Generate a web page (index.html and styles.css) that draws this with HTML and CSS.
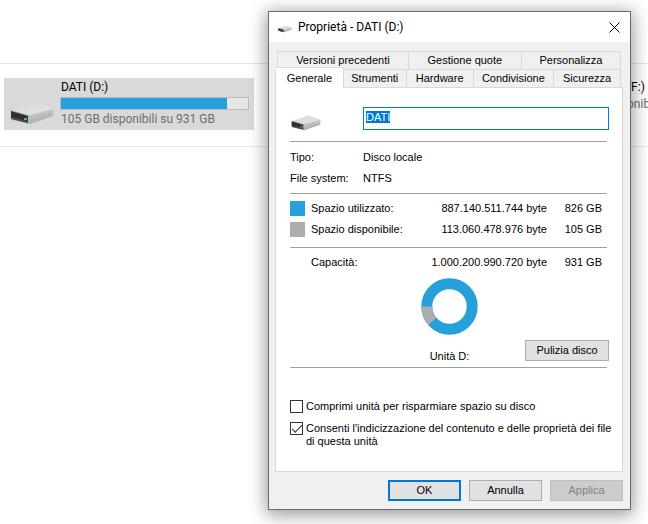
FILE: index.html
```html
<!DOCTYPE html>
<html lang="it">
<head>
  <meta charset="UTF-8" />
  <meta name="viewport" content="width=device-width, initial-scale=1.0" />
  <title>Proprietà - DATI (D:)</title>
  <link rel="stylesheet" href="styles.css">
</head>
<body>
  <!-- Icona disco condivisa -->
  <svg class="defs" width="0" height="0" aria-hidden="true">
    <defs>
      <linearGradient id="top-face" x1="0" y1="0" x2="1" y2="1">
        <stop offset="0" stop-color="#d8dadc" />
        <stop offset="1" stop-color="#e4e4e8" />
      </linearGradient>
      <linearGradient id="side-face" x1="0" y1="0" x2="0.4" y2="1">
        <stop offset="0" stop-color="#d6d7d9" />
        <stop offset="1" stop-color="#a6a8ab" />
      </linearGradient>
      <symbol id="drive" viewBox="0 0 44 23">
        <path d="M1 9 L24 1 Q26 0 28 1 L42 6 L43 8 L19 15 Z" fill="url(#top-face)" />
        <path d="M19 13 L43 7 V14 L20 22 L18 22 Z" fill="url(#side-face)" />
        <path d="M1 8 L19 13 V22 L2 18 Q1 18 1 17 Z" fill="#b4b6b8" />
        <path d="M1 9 L18 14 V21 L2 17 L1 16 Z" fill="#2f3130" />
        <path d="M2 15 L18 19 V21 L2 17 Z" fill="#4a4c4b" />
        <rect x="14" y="16" width="3" height="2" fill="#35d045" />
      </symbol>
    </defs>
  </svg>

  <!-- Elenco unità -->
  <main class="explorer">
    <div class="drives">
      <div class="drive selected">
        <svg class="drive-icon"><use href="#drive" /></svg>
        <div class="drive-info">
          <div class="drive-name">DATI (D:)</div>
          <div class="usage"><div class="usage-fill" style="width: 89%"></div></div>
          <div class="drive-free">105 GB disponibili su 931 GB</div>
        </div>
      </div>
      <div class="drive other">
        <div class="drive-info">
          <div class="drive-name">(F:) C</div>
          <div class="usage-space"></div>
          <div class="drive-free">onib</div>
        </div>
      </div>
    </div>
  </main>

  <!-- Finestra proprietà -->
  <form class="dialog" role="dialog" aria-labelledby="dialog-title">
    <header class="titlebar">
      <svg class="title-icon"><use href="#drive" /></svg>
      <span id="dialog-title">Proprietà - DATI (D:)</span>
      <button type="button" class="close" aria-label="Chiudi">
        <svg width="11" height="11" viewBox="0 0 11 11"><path d="M0.5 0.5 L10.5 10.5 M10.5 0.5 L0.5 10.5" stroke="#000" fill="none" /></svg>
      </button>
    </header>

    <div class="content">
      <div class="tabs tabs-back">
        <button type="button">Versioni precedenti</button>
        <button type="button">Gestione quote</button>
        <button type="button">Personalizza</button>
      </div>
      <div class="tabs tabs-front">
        <button type="button" class="active">Generale</button>
        <button type="button">Strumenti</button>
        <button type="button">Hardware</button>
        <button type="button">Condivisione</button>
        <button type="button">Sicurezza</button>
      </div>

      <div class="panel">
        <div class="label-row">
          <svg class="label-icon"><use href="#drive" /></svg>
          <input type="text" id="volume-name" aria-label="Nome unità" value="DATI" spellcheck="false">
        </div>
        <hr>
        <dl class="details">
          <dt>Tipo:</dt><dd>Disco locale</dd>
          <dt>File system:</dt><dd>NTFS</dd>
        </dl>
        <hr>
        <table class="space">
          <tr>
            <td class="key"><span class="swatch used"></span></td>
            <th scope="row">Spazio utilizzato:</th>
            <td>887.140.511.744 byte</td>
            <td class="gb">826 GB</td>
          </tr>
          <tr>
            <td class="key"><span class="swatch free"></span></td>
            <th scope="row">Spazio disponibile:</th>
            <td>113.060.478.976 byte</td>
            <td class="gb">105 GB</td>
          </tr>
        </table>
        <hr>
        <table class="space capacity">
          <tr>
            <td class="key"></td>
            <th scope="row">Capacità:</th>
            <td>1.000.200.990.720 byte</td>
            <td class="gb">931 GB</td>
          </tr>
        </table>

        <svg class="chart" width="57" height="57" viewBox="0 0 57 57">
          <circle cx="28.5" cy="28.5" r="22.7" fill="none" stroke="#26a0da" stroke-width="11" />
          <path d="M5.8 28.5 A22.7 22.7 0 0 0 11.3 43.3" fill="none" stroke="#adadad" stroke-width="11" />
        </svg>
        <div class="unit-row">
          <span class="unit">Unità D:</span>
          <button type="button" class="btn cleanup">Pulizia disco</button>
        </div>
        <hr>

        <div class="options">
          <label><input type="checkbox"><span>Comprimi unità per risparmiare spazio su disco</span></label>
          <label><input type="checkbox" checked><span>Consenti l'indicizzazione del contenuto e delle proprietà dei file di questa unità</span></label>
        </div>
      </div>

      <footer class="actions">
        <button type="button" class="btn default">OK</button>
        <button type="button" class="btn">Annulla</button>
        <button type="button" class="btn" disabled>Applica</button>
      </footer>
    </div>
  </form>

  <script>
    const nameBox = document.getElementById('volume-name');
    nameBox.focus();
    nameBox.select();
  </script>
</body>
</html>
```
FILE: styles.css
```css
* {
  box-sizing: border-box;
}
body {
  margin: 0;
  min-height: 100vh;
  overflow: hidden;
  background: #fff;
  font-family: "Liberation Sans", Arial, sans-serif;
  font-size: 11px;
  line-height: 13px;
  color: #000;
}
button,
input {
  font: inherit;
  color: inherit;
}
.defs {
  position: absolute;
}

/* Elenco unità */
.explorer {
  padding-top: 63px;
  font-family: Roboto, "Liberation Sans", sans-serif;
  font-size: 12px;
  line-height: 16px;
}
.drives {
  display: flex;
  justify-content: space-between;
  border-top: 1px solid #e5e5e5;
  border-bottom: 1px solid #e5e5e5;
  padding: 14px 0 16px 4px;
  overflow: hidden;
}
.drive {
  display: flex;
  height: 52px;
}
.drive.selected {
  width: 250px;
  background: #d9d9d9;
  padding: 1px 5px 0 6px;
}
.drive.other {
  width: 22px;
  padding-top: 1px;
  white-space: nowrap;
}
.drive-icon {
  width: 44px;
  height: 23px;
  margin: 23px 6px 0 0;
}
.drive-info {
  flex: 1;
}
.drive-name {
  padding-left: 1px;
}
.usage {
  height: 13px;
  margin: 2px 0 1px;
  border: 1px solid #bcbcbc;
  background: #e6e6e6;
}
.usage-fill {
  height: 100%;
  background: #26a0da;
}
.usage-space {
  height: 1px;
}
.drive-free {
  padding-left: 1px;
  color: #6d6d6d;
}

/* Finestra */
.dialog {
  position: absolute;
  top: 11px;
  left: 268px;
  right: 17px;
  border: 1px solid #6b6b6b;
  background: #f0f0f0;
  box-shadow: 0 3px 16px 2px rgba(0, 0, 0, 0.4);
}
.titlebar {
  display: flex;
  align-items: center;
  height: 30px;
  padding: 0 10px 0 9px;
  background: #fff;
  font-family: Roboto, "Liberation Sans", sans-serif;
  font-size: 12px;
}
.title-icon {
  width: 14px;
  height: 8px;
  margin: 3px 6px 0 0;
}
.close {
  display: flex;
  margin-left: auto;
  padding: 0;
  border: 0;
  background: none;
}
.content {
  padding: 9px 7px 8px 6px;
}

/* Schede */
.tabs {
  display: flex;
  height: 18px;
  margin: 0 2px;
  border-left: 1px solid #d9d9d9;
}
.tabs button {
  flex: 81 1 0;
  padding: 0;
  border: solid #d9d9d9;
  border-width: 1px 1px 0 0;
  background: #f0f0f0;
  line-height: 17px;
  white-space: nowrap;
}
.tabs-back button:nth-child(1) {
  flex-grow: 131;
}
.tabs-back button:nth-child(2) {
  flex-grow: 113;
}
.tabs-back button:nth-child(3) {
  flex-grow: 99;
}
.tabs-front {
  margin-left: 0;
}
.tabs-front button:nth-child(2) {
  flex-grow: 63;
}
.tabs-front button:nth-child(3),
.tabs-front button:nth-child(5) {
  flex-grow: 67;
}
.tabs-front .active {
  flex-grow: 68;
  height: 21px;
  margin-top: -2px;
  background: #fff;
  z-index: 1;
}

/* Contenuto scheda */
.panel {
  border: 1px solid #d9d9d9;
  background: #fff;
  padding: 19px 13px 14px 14px;
}
hr {
  height: 1px;
  margin: 0 2px 0 0;
  border: 0;
  background: #a0a0a0;
}
.label-row {
  display: flex;
  margin-bottom: 10px;
}
.label-icon {
  width: 30px;
  height: 16px;
  margin: 8px 42px 0 1px;
}
.label-row input {
  flex: 1;
  min-width: 0;
  height: 23px;
  padding: 2px 2px 6px;
  border: 1px solid #0078d7;
  border-radius: 0;
  outline: 0;
  background: #fff;
}
.label-row input::selection {
  background: #0078d7;
  color: #fff;
}
.details {
  display: grid;
  grid-template-columns: 73px 1fr;
  margin: 0;
  padding: 5px 0 4px;
  line-height: 21px;
}
.details dd {
  margin: 0;
}
.space {
  width: calc(100% - 7px);
  border-collapse: collapse;
  margin: 4px 0 7px;
}
.space tr {
  height: 21px;
}
.space td,
.space th {
  padding: 0;
  font-weight: normal;
  text-align: right;
  white-space: nowrap;
}
.space .key {
  width: 21px;
  text-align: left;
}
.space th {
  text-align: left;
}
.space .gb {
  width: 55px;
}
.swatch {
  display: block;
  width: 15px;
  height: 15px;
}
.used {
  background: #26a0da;
}
.free {
  background: #adadad;
}
.capacity {
  margin-bottom: 5px;
}
.chart {
  display: block;
  margin: 0 auto 5px;
}
.unit-row {
  display: grid;
  grid-template-columns: 84px 1fr 84px;
  height: 27px;
}
.unit {
  grid-column: 2;
  margin-top: 10px;
  text-align: center;
}
.btn {
  width: 73px;
  height: 21px;
  padding: 0;
  border: 1px solid #adadad;
  background: #e1e1e1;
}
.cleanup {
  width: 84px;
}
.default {
  border: 2px solid #0078d7;
}
.btn:disabled {
  border-color: #bfbfbf;
  background: #ccc;
  color: #838383;
}

/* Opzioni */
.options {
  margin-right: -8px;
  padding-top: 32px;
}
.options label {
  display: flex;
  gap: 3px;
  margin-bottom: 9px;
}
.options input {
  appearance: none;
  flex: none;
  width: 13px;
  height: 13px;
  margin: 0;
  border: 1px solid #333;
  background: #fff;
}
.options input:checked::before {
  content: "";
  display: block;
  width: 9px;
  height: 4px;
  margin: 2px 1px;
  border: solid #333;
  border-width: 0 0 1px 1px;
  transform: rotate(-45deg);
}
.actions {
  display: flex;
  justify-content: flex-end;
  gap: 8px;
  padding-top: 8px;
}
```
